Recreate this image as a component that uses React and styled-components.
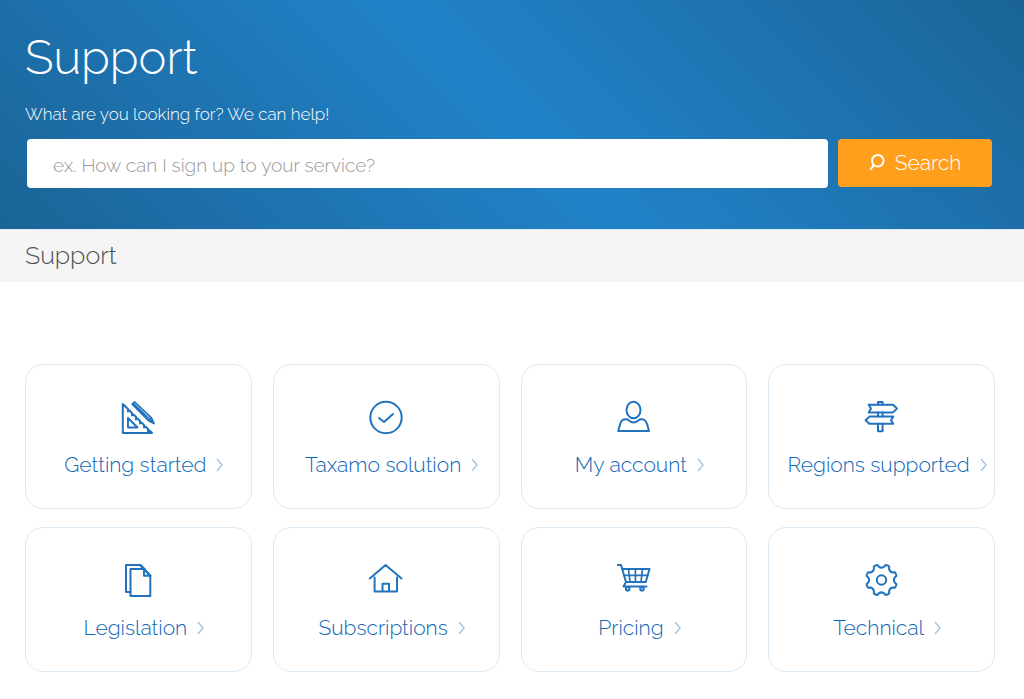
import React from "react";
import styled, { createGlobalStyle } from "styled-components";

const GlobalStyle = createGlobalStyle`
  *, *::before, *::after { box-sizing: border-box; }
  body {
    margin: 0;
    background: #fff;
    font-family: Raleway, "Open Sans", sans-serif;
    font-weight: 300;
  }
`;

const Hero = styled.header`
  padding: 28px 32px 41px 25px;
  color: #fff;
  background: linear-gradient(45deg, #1a6496 0%, #1c6ba3 12%, #2182c8 50%, #1c6ba3 88%, #1a6496 100%);
`;

const Title = styled.h1`
  margin: 0 0 14px;
  font-size: 47px;
  line-height: 60px;
  font-weight: 300;
`;

const Prompt = styled.label`
  display: block;
  margin-bottom: 13px;
  font-size: 17px;
  line-height: 24px;
`;

const SearchForm = styled.form`
  display: flex;
  align-items: flex-start;
  gap: 10px;
  padding-left: 2px;
`;

const SearchInput = styled.input`
  flex: 1;
  min-width: 0;
  height: 49px;
  padding: 2px 26px 0;
  border: 0;
  border-radius: 4px;
  background: #fff;
  color: #555;
  font: inherit;
  font-size: 19px;
  &::placeholder {
    color: #999;
    opacity: 1;
  }
`;

const SearchButton = styled.button`
  display: flex;
  align-items: center;
  justify-content: center;
  gap: 10px;
  width: 154px;
  height: 48px;
  padding: 0 0 2px;
  border: 0;
  border-radius: 4px;
  background: #ff9f1c;
  color: #fff;
  font: inherit;
  font-size: 21px;
  cursor: pointer;
`;

const Breadcrumb = styled.nav`
  padding: 7px 25px 9px;
  border-top: 1px solid #dfe9f1;
  background: #f5f5f5;
  color: #505050;
  font-size: 25px;
  line-height: 36px;
`;

const Topics = styled.main`
  display: grid;
  grid-template-columns: repeat(4, minmax(0, 1fr));
  gap: 19px 21px;
  padding: 82px 29px 28px 25px;
`;

const TopicCard = styled.a`
  display: flex;
  flex-direction: column;
  align-items: center;
  gap: 15px;
  height: 145px;
  margin-bottom: -1px;
  padding-top: 35px;
  border: 1px solid #dceaf6;
  border-radius: 18px;
  background: #fff;
  color: #0f66b5;
  text-decoration: none;
`;

const TopicIcon = styled.svg`
  width: 36px;
  height: 36px;
  fill: none;
  stroke: #2273bd;
  stroke-width: 2;
  stroke-linecap: round;
  stroke-linejoin: round;
`;

const TopicLabel = styled.span`
  display: flex;
  align-items: center;
  gap: 10px;
  padding-left: 11px;
  font-size: 21px;
  line-height: 28px;
  white-space: nowrap;
`;

const ChevronSvg = styled.svg`
  flex: none;
  width: 7px;
  height: 14px;
  fill: none;
  stroke: #a9c5e2;
  stroke-width: 1.5;
`;

const gearPath = (() => {
  const at = (deg, r) => {
    const a = (deg * Math.PI) / 180;
    return `${(17.5 + r * Math.cos(a)).toFixed(2)} ${(17 + r * Math.sin(a)).toFixed(2)}`;
  };
  let d = "";
  for (let i = 0; i < 8; i += 1) {
    const a = 22.5 + 45 * i;
    d += `${i ? "L" : "M"}${at(a - 7, 15.5)}Q${at(a, 16)} ${at(a + 7, 15.5)}`;
    d += `L${at(a + 12, 13.4)}Q${at(a + 22.5, 11.6)} ${at(a + 33, 13.4)}`;
  }
  return `${d}Z`;
})();

const icons = {
  ruler: (
    <>
      <path d="M2.8 4V33H32L29.5 30.5L28 31.5V29L25.5 26.5L24 27.5V25L21.5 22.5L20 23.5V21L17.5 18.5L16 19.5V17L13.5 14.5L12 15.5V13L9.5 10.5L8 11.5V9Z" />
      <path d="M8 18V27.5H17.5Z" />
      <path d="M12.2 4.2L14.7 2L31.5 17.8L34 23.5L28.5 20.7ZM14 4L30 19.5M28.5 20.7L31.5 17.8M30 20L34 23.5" strokeWidth="1.7" />
    </>
  ),
  check: (
    <>
      <circle cx="18" cy="17.5" r="15.7" />
      <path d="M11 18L16 22L25 14" />
    </>
  ),
  user: (
    <>
      <ellipse cx="17.5" cy="10" rx="7" ry="8.3" />
      <path d="M11 19.3C6 19 5 21 4 24.5L2.2 31H33L31.2 24.5C30 20.5 28.5 18.8 24.3 19.3C22.5 20 20.8 22.5 17.6 22.5C14.4 22.5 12.8 20 11 19.3Z" />
    </>
  ),
  signpost: (
    <>
      <path d="M14 4.7V2H18.6V4.7M14 12.4V16.6M18.6 12.4V16.6M14 23.8V31.2H18.6V23.8" />
      <path d="M4.7 4.7H29L33 8.5L29 12.4H4.7L7 8.5Z" />
      <path d="M29.3 16.6H5.3L1.6 20.2L5.3 23.8H29.3L27 20.2Z" />
    </>
  ),
  documents: (
    <>
      <path d="M10.5 29H6V2H20.5L24.5 6" />
      <path d="M20 2L30.5 12.7L25 7Z" />
      <path d="M10.5 6H24L30.3 12.7V33H10.5ZM24 6V12.7H30.3" />
    </>
  ),
  house: <path d="M1.8 15.5L17.6 2L33.5 15.5M6.6 14.5V28.4H29V14.5M14.5 28.4V20.7H21V28.4" />,
  cart: (
    <>
      <path d="M1.8 2H5L10 19M6 6H33.5L29.8 19H10L7.5 23.4H30.5" />
      <path d="M8 12.3H31.5M12.5 6L14 19M19.4 6V19M26.5 6L25 19" strokeWidth="1.7" />
      <circle cx="11.7" cy="25.8" r="1.8" />
      <circle cx="26" cy="25.8" r="1.8" />
    </>
  ),
  gear: (
    <>
      <path d={gearPath} />
      <circle cx="17.5" cy="17" r="4.7" />
    </>
  ),
};

const topics = [
  { label: "Getting started", icon: "ruler" },
  { label: "Taxamo solution", icon: "check" },
  { label: "My account", icon: "user" },
  { label: "Regions supported", icon: "signpost" },
  { label: "Legislation", icon: "documents" },
  { label: "Subscriptions", icon: "house" },
  { label: "Pricing", icon: "cart" },
  { label: "Technical", icon: "gear" },
];

function Topic({ label, icon }) {
  return (
    <TopicCard href="#">
      <TopicIcon viewBox="0 0 36 36" aria-hidden="true">{icons[icon]}</TopicIcon>
      <TopicLabel>
        {label}
        <ChevronSvg viewBox="0 0 7 14" aria-hidden="true">
          <path d="M1 1L6 7L1 13" />
        </ChevronSvg>
      </TopicLabel>
    </TopicCard>
  );
}

export default function App() {
  return (
    <>
      <GlobalStyle />
      <Hero>
        <Title>Support</Title>
        <Prompt htmlFor="query">What are you looking for? We can help!</Prompt>
        <SearchForm onSubmit={(event) => event.preventDefault()}>
          <SearchInput id="query" type="text" placeholder="ex. How can I sign up to your service?" />
          <SearchButton type="submit">
            <svg width="16" height="18" viewBox="0 0 16 18" fill="none" stroke="#fff" strokeWidth="2" aria-hidden="true">
              <circle cx="8.8" cy="7.8" r="5.8" />
              <path d="M5 12L1.2 16.5" />
            </svg>
            Search
          </SearchButton>
        </SearchForm>
      </Hero>
      <Breadcrumb aria-label="Breadcrumb">Support</Breadcrumb>
      <Topics>
        {topics.map((topic) => (
          <Topic key={topic.label} {...topic} />
        ))}
      </Topics>
    </>
  );
}
